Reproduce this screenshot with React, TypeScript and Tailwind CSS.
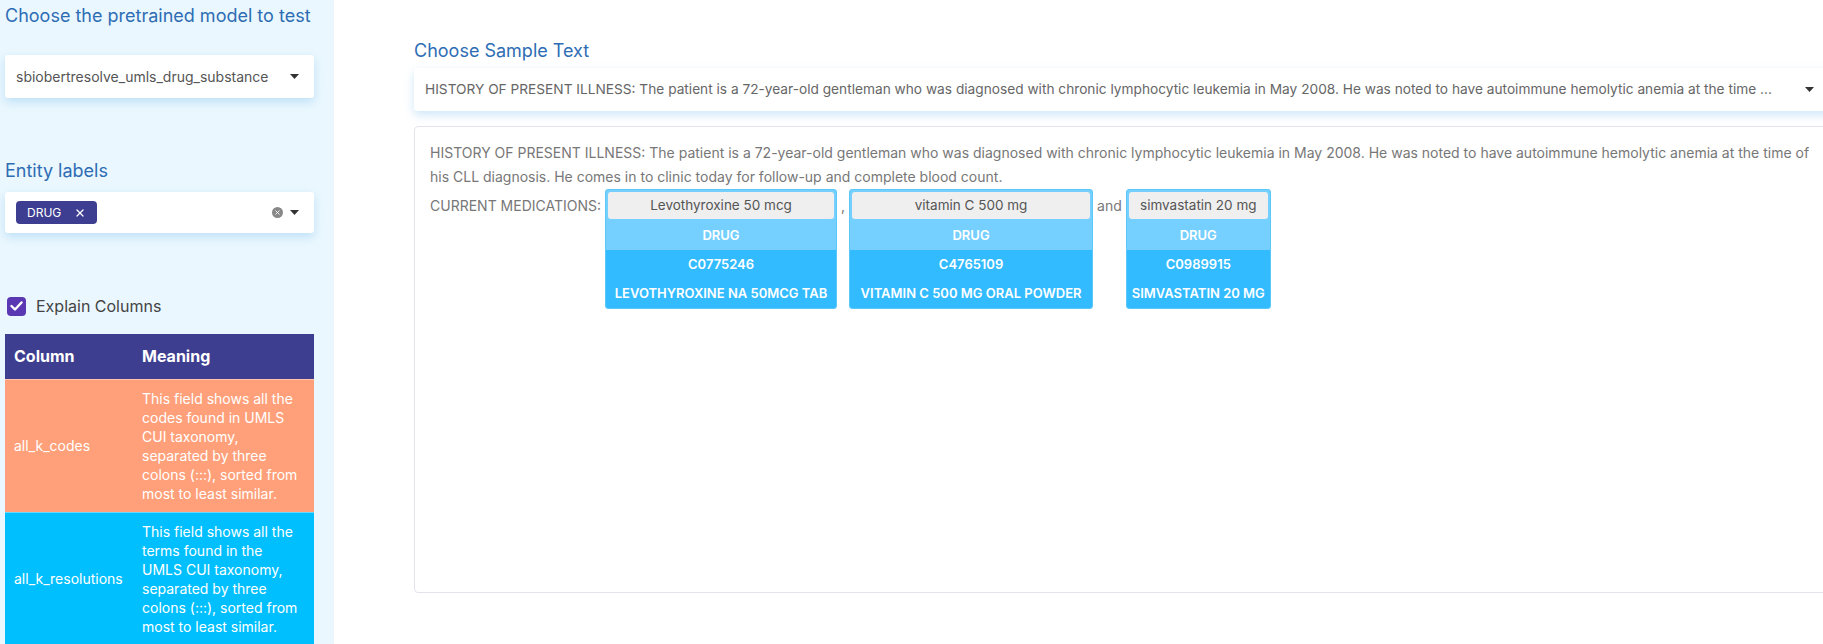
import React from 'react';
import { X } from 'lucide-react';

const SAMPLE =
  'HISTORY OF PRESENT ILLNESS: The patient is a 72-year-old gentleman who was diagnosed with chronic lymphocytic leukemia in May 2008. He was noted to have autoimmune hemolytic anemia at the time of his CLL diagnosis. He comes in to clinic today for follow-up and complete blood count.';

const SAMPLE_SHORT =
  'HISTORY OF PRESENT ILLNESS: The patient is a 72-year-old gentleman who was diagnosed with chronic lymphocytic leukemia in May 2008. He was noted to have autoimmune hemolytic anemia at the time ...';

const COLUMNS = [
  {
    name: 'all_k_codes',
    meaning:
      'This field shows all the codes found in UMLS CUI taxonomy, separated by three colons (:::), sorted from most to least similar.',
    bg: 'bg-[#ffa07a]',
  },
  {
    name: 'all_k_resolutions',
    meaning:
      'This field shows all the terms found in the UMLS CUI taxonomy, separated by three colons (:::), sorted from most to least similar.',
    bg: 'bg-[#00bfff]',
  },
];

const Caret = () => (
  <svg width="9" height="5" viewBox="0 0 9 5" className="shrink-0">
    <path d="M0 0h9L4.5 5z" fill="#333" />
  </svg>
);

const Entity = ({ text, code, resolution, width }: { text: string; code: string; resolution: string; width: string }) => (
  <div className={`${width} shrink-0 flex flex-col border-[1.5px] border-[#5cc8fa] rounded-[3px] overflow-hidden bg-[#75cfff]`}>
    <div className="m-[2px] h-[27px] rounded-[3px] bg-[#efefef] flex items-center justify-center text-[13.5px] text-[#555] whitespace-nowrap">
      {text}
    </div>
    <div className="h-[29px] flex items-center justify-center text-[13px] font-semibold text-white">DRUG</div>
    <div className="h-[29px] flex items-center justify-center text-[13px] font-semibold text-white bg-[#33bbff]">{code}</div>
    <div className="h-[29px] flex items-center justify-center text-[13px] font-semibold text-white bg-[#33bbff] whitespace-nowrap">
      {resolution}
    </div>
  </div>
);

export default function App() {
  return (
    <div className="flex w-[1823px] h-[644px] overflow-hidden bg-white font-['Inter',sans-serif]">
      {/* Sidebar */}
      <aside className="w-[334px] shrink-0 bg-[#eaf7fe] pl-[5px] pt-[4px]">
        <div className="w-[309px]">
          <h3 className="text-[18px] leading-[24px] text-[#2e6db4] whitespace-nowrap">Choose the pretrained model to test</h3>
          <div className="mt-[27px] h-[43px] bg-white rounded-[3px] shadow-[0_4px_10px_rgba(80,170,230,0.28)] flex items-center justify-between pl-[11px] pr-[15px]">
            <span className="text-[14px] text-[#555]">sbiobertresolve_umls_drug_substance</span>
            <Caret />
          </div>

          <h3 className="mt-[61px] text-[18px] leading-[24px] text-[#2e6db4]">Entity labels</h3>
          <div className="mt-[9px] h-[41px] bg-white rounded-[3px] shadow-[0_4px_10px_rgba(80,170,230,0.28)] flex items-center justify-between pl-[11px] pr-[15px]">
            <span className="h-[23px] px-[11px] rounded-[4px] bg-[#3d3d91] text-white text-[12px] flex items-center gap-[13px]">
              DRUG
              <X size={12} strokeWidth={2.5} />
            </span>
            <div className="flex items-center gap-[7px]">
              <span className="w-[11px] h-[11px] rounded-full bg-[#888] flex items-center justify-center">
                <X size={7} strokeWidth={3} color="white" />
              </span>
              <Caret />
            </div>
          </div>

          <label className="mt-[61px] flex items-center gap-[10px] pl-[2px]">
            <span className="w-[19px] h-[19px] rounded-[4px] bg-[#5a38b3] flex items-center justify-center">
              <svg width="13" height="10" viewBox="0 0 13 10">
                <path d="M1.5 5l3.5 3.5L11.5 1.5" fill="none" stroke="white" strokeWidth="2.4" strokeLinecap="round" strokeLinejoin="round" />
              </svg>
            </span>
            <span className="text-[16px] text-[#444]">Explain Columns</span>
          </label>

          <table className="mt-[16px] w-[309px] border-collapse text-white">
            <thead>
              <tr className="bg-[#3e3e90] h-[45px]">
                <th className="w-[128px] pl-[9px] text-left text-[16px] font-bold">Column</th>
                <th className="pl-[9px] text-left text-[16px] font-bold">Meaning</th>
              </tr>
            </thead>
            <tbody>
              {COLUMNS.map((c) => (
                <tr key={c.name} className={`${c.bg} border-t border-white/40`}>
                  <td className="pl-[9px] text-[14px] align-middle">{c.name}</td>
                  <td className="pl-[9px] pr-[8px] py-[9px] text-[14px] leading-[19px]">{c.meaning}</td>
                </tr>
              ))}
            </tbody>
          </table>
        </div>
      </aside>

      {/* Main */}
      <main className="pl-[80px] pt-[39px] shrink-0">
        <div className="w-[1425px]">
          <h3 className="text-[18px] leading-[24px] text-[#2e6db4]">Choose Sample Text</h3>
          <div className="mt-[5px] h-[43px] bg-white rounded-[3px] shadow-[0_4px_10px_rgba(80,170,230,0.28)] flex items-center pl-[11px] pr-[25px] gap-[8px]">
            <span className="w-[1374px] whitespace-nowrap overflow-hidden text-[13.7px] text-[#666]">{SAMPLE_SHORT}</span>
            <Caret />
          </div>

          <div className="mt-[15px] h-[467px] border border-[#e3e3ee] rounded-[4px] pl-[15px] pr-[16px] pt-[14px] text-[14px] text-[#777]">
            <p className="leading-[24px]">{SAMPLE}</p>
            <div className="flex items-start gap-[4px]">
              <span className="mt-[3px] h-[27px] flex items-center whitespace-nowrap">CURRENT MEDICATIONS:</span>
              <Entity text="Levothyroxine 50 mcg" code="C0775246" resolution="LEVOTHYROXINE NA 50MCG TAB" width="w-[232px]" />
              <span className="mt-[3px] h-[27px] flex items-center">,</span>
              <Entity text="vitamin C 500 mg" code="C4765109" resolution="VITAMIN C 500 MG ORAL POWDER" width="w-[244px]" />
              <span className="mt-[3px] h-[27px] flex items-center">and</span>
              <Entity text="simvastatin 20 mg" code="C0989915" resolution="SIMVASTATIN 20 MG" width="w-[145px]" />
            </div>
          </div>
        </div>
      </main>
    </div>
  );
}
